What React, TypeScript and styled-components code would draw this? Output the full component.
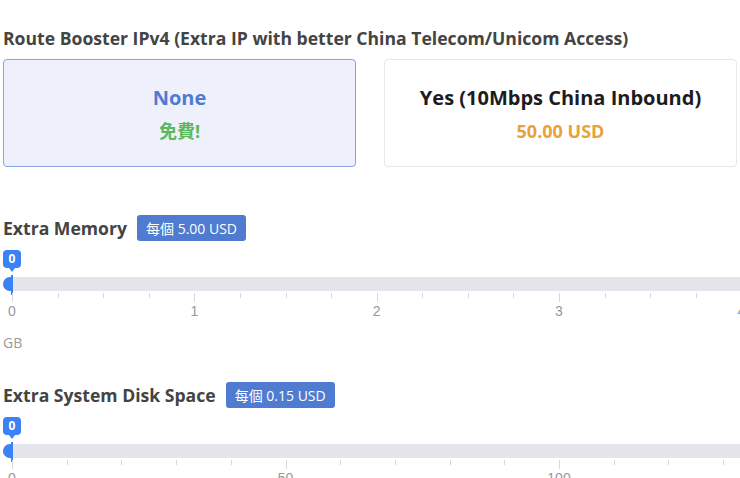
import React from 'react'
import styled, { createGlobalStyle } from 'styled-components'

const GlobalStyle = createGlobalStyle`
  html, body {
    margin: 0;
    padding: 0;
    background: #fff;
    overflow: hidden;
  }
  body {
    font-family: 'Open Sans', 'Noto Sans CJK TC', sans-serif;
    color: #444;
  }
`

interface SliderConfig {
  title: string
  price: string
  max: number
  major: number
  minor: number
  unit?: string
}

const PX_WIDTH = 1094

const sliders: SliderConfig[] = [
  { title: 'Extra Memory', price: '每個 5.00 USD', max: 6, major: 1, minor: 0.25, unit: 'GB' },
  { title: 'Extra System Disk Space', price: '每個 0.15 USD', max: 200, major: 50, minor: 10 },
]

const RangeSlider: React.FC<{ cfg: SliderConfig }> = ({ cfg }) => {
  const ticks: { v: number; major: boolean }[] = []
  const count = Math.round(cfg.max / cfg.minor)
  for (let i = 0; i <= count; i++) {
    const v = i * cfg.minor
    ticks.push({ v, major: Math.abs(v / cfg.major - Math.round(v / cfg.major)) < 1e-6 })
  }
  const scale = PX_WIDTH / cfg.max

  return (
    <SliderWrap>
      <Bubble>0</Bubble>
      <Track>
        <Fill />
        <Handle />
      </Track>
      <Grid>
        {ticks.map((t) => (
          <Tick key={t.v} $major={t.major} style={{ left: 9 + t.v * scale }}>
            {t.major && <TickLabel>{t.v}</TickLabel>}
          </Tick>
        ))}
      </Grid>
    </SliderWrap>
  )
}

const App: React.FC = () => {
  return (
    <Page>
      <GlobalStyle />
      <SectionTitle>Route Booster IPv4 (Extra IP with better China Telecom/Unicom Access)</SectionTitle>
      <Options>
        <OptionCard $selected>
          <OptionName $selected>None</OptionName>
          <OptionPrice $free>免費!</OptionPrice>
        </OptionCard>
        <OptionCard>
          <OptionName>Yes (10Mbps China Inbound)</OptionName>
          <OptionPrice>50.00 USD</OptionPrice>
        </OptionCard>
      </Options>

      {sliders.map((s) => (
        <SliderSection key={s.title}>
          <SliderHeader>
            <SectionTitle as="span">{s.title}</SectionTitle>
            <PriceBadge>{s.price}</PriceBadge>
          </SliderHeader>
          <RangeSlider cfg={s} />
          {s.unit && <Unit>{s.unit}</Unit>}
        </SliderSection>
      ))}
    </Page>
  )
}

export default App

const Page = styled.div`
  padding: 27px 0 0 3px;
  width: 1200px;
`

const SectionTitle = styled.div`
  font-size: 17.6px;
  font-weight: 700;
  line-height: 22px;
  color: #444;
`

const Options = styled.div`
  display: grid;
  grid-template-columns: 353px 353px;
  column-gap: 28px;
  margin-top: 10px;
`

const OptionCard = styled.div<{ $selected?: boolean }>`
  box-sizing: border-box;
  height: 108px;
  border-radius: 4px;
  border: 1px solid ${(p) => (p.$selected ? '#86a3e3' : '#e6e6eb')};
  background: ${(p) => (p.$selected ? '#eef1fb' : '#fff')};
  display: flex;
  flex-direction: column;
  align-items: center;
  justify-content: center;
  gap: 8px;
  padding-top: 2px;
`

const OptionName = styled.div<{ $selected?: boolean }>`
  font-size: 20px;
  font-weight: 700;
  line-height: 26px;
  color: ${(p) => (p.$selected ? '#4f7bd0' : '#1c1c1f')};
`

const OptionPrice = styled.div<{ $free?: boolean }>`
  font-size: 18px;
  font-weight: 700;
  line-height: 24px;
  color: ${(p) => (p.$free ? '#5cb85c' : '#e9a23b')};
`

const SliderSection = styled.div`
  margin-top: 48px;

  & + & {
    margin-top: 29px;
  }
`

const SliderHeader = styled.div`
  display: flex;
  align-items: center;
  gap: 10px;
`

const PriceBadge = styled.span`
  display: inline-flex;
  align-items: center;
  height: 26px;
  padding: 0 9px;
  border-radius: 3px;
  background: #4f7bd0;
  color: #fff;
  font-size: 14px;
  font-family: 'Open Sans', 'Noto Sans CJK TC', sans-serif;
`

const SliderWrap = styled.div`
  position: relative;
  width: ${PX_WIDTH + 20}px;
  padding-top: 9px;
`

const Bubble = styled.div`
  position: relative;
  width: 18px;
  height: 18px;
  border-radius: 4px;
  background: #3b82f6;
  color: #fff;
  font-size: 12px;
  font-weight: 700;
  line-height: 18px;
  text-align: center;

  &::after {
    content: '';
    position: absolute;
    left: 6px;
    top: 18px;
    border-left: 3px solid transparent;
    border-right: 3px solid transparent;
    border-top: 4px solid #3b82f6;
  }
`

const Track = styled.div`
  position: relative;
  margin-top: 9px;
  height: 14px;
  border-radius: 7px 0 0 7px;
  background: #e4e5eb;
`

const Fill = styled.div`
  position: absolute;
  left: 0;
  top: 0;
  width: 9px;
  height: 14px;
  border-radius: 7px 0 0 7px;
  background: #3b82f6;
`

const Handle = styled.div`
  position: absolute;
  left: 8px;
  top: -2px;
  width: 2px;
  height: 20px;
  background: #3b82f6;
`

const Grid = styled.div`
  position: relative;
  height: 40px;
  margin-top: 2px;
`

const Tick = styled.div<{ $major: boolean }>`
  position: absolute;
  top: 0;
  width: 1px;
  height: ${(p) => (p.$major ? 9 : 5)}px;
  background: #d8d8dc;
`

const TickLabel = styled.span`
  position: absolute;
  top: 10px;
  left: 0;
  transform: translateX(-50%);
  font-family: 'Liberation Sans', Arial, sans-serif;
  font-size: 14px;
  line-height: 16px;
  color: #999;
`

const Unit = styled.div`
  font-size: 14px;
  line-height: 20px;
  color: #999;
`
